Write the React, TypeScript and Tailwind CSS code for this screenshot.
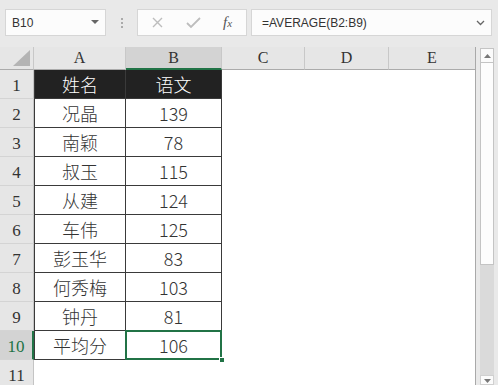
import React from "react";

const rows: [string, string][] = [
  ["况晶", "139"],
  ["南颖", "78"],
  ["叔玉", "115"],
  ["从建", "124"],
  ["车伟", "125"],
  ["彭玉华", "83"],
  ["何秀梅", "103"],
  ["钟丹", "81"],
];

const cjk = { fontFamily: '"Noto Sans CJK SC", "Noto Sans", sans-serif' };
const serif = { fontFamily: '"Liberation Serif", "DejaVu Serif", serif' };
const ui = { fontFamily: '"Liberation Sans", Arial, sans-serif' };

function RowHead({ n, sel, h = "h-[29px]" }: { n: number; sel?: boolean; h?: string }) {
  return (
    <div
      className={`w-[34px] ${h} shrink-0 flex items-end justify-center pb-[2px] text-[17px] leading-none border-b border-[#d4d4d4] ${
        sel ? "bg-[#d3d3d3] text-[#217346] border-r-2 border-r-[#217346]" : "bg-[#e6e6e6] text-[#333] border-r border-r-[#c4c4c4]"
      }`}
      style={serif}
    >
      <span className="pb-[2px]">{n}</span>
    </div>
  );
}

function Cell({ children, w, first, black, sel }: { children?: React.ReactNode; w: string; first?: boolean; black?: boolean; sel?: boolean }) {
  return (
    <div
      className={`${w} h-[29px] shrink-0 relative flex items-center justify-center text-[18px] font-light leading-none border-b border-r border-[#3a3a3a] ${
        first ? "border-l" : ""
      } ${black ? "bg-[#222222] text-white" : "bg-white text-[#333]"}`}
      style={cjk}
    >
      {children}
      {sel && (
        <>
          <div className="absolute left-[-1px] top-[-1px] right-[-1px] bottom-[-1px] border-2 border-[#217346]" />
          <div className="absolute right-[-4px] bottom-[-4px] w-[6px] h-[6px] bg-[#217346] border border-white" />
        </>
      )}
    </div>
  );
}

function ColHead({ label, w, sel }: { label: string; w: string; sel?: boolean }) {
  return (
    <div
      className={`${w} h-[23px] shrink-0 flex items-center justify-center text-[16px] leading-none text-[#333] ${
        sel ? "bg-[#d3d3d3] border-b-2 border-b-[#217346]" : "bg-[#e6e6e6] border-b border-b-[#ababab]"
      } border-r border-r-[#c8c8c8]`}
      style={serif}
    >
      {label}
    </div>
  );
}

export default function App() {
  return (
    <div className="w-[498px] h-[385px] overflow-hidden bg-[#e9e9e9] flex flex-col">
      {/* toolbar */}
      <div className="h-[47px] shrink-0 flex items-start pt-[9px] pl-[5px]">
        <div className="w-[101px] h-[27px] bg-[#fcfcfc] border border-[#d6d6d6] flex items-center justify-between pl-[6px] pr-[6px]">
          <span className="text-[12px] text-[#333]" style={ui}>B10</span>
          <svg width="8" height="5" viewBox="0 0 8 5"><path d="M0 0 L8 0 L4 4 Z" fill="#666" /></svg>
        </div>
        <div className="w-[31px] h-[27px] flex flex-col items-center justify-center gap-[2px]">
          <div className="w-[2px] h-[2px] bg-[#aaa]" />
          <div className="w-[2px] h-[2px] bg-[#aaa]" />
          <div className="w-[2px] h-[2px] bg-[#aaa]" />
        </div>
        <div className="w-[110px] h-[27px] bg-[#fcfcfc] border border-[#d6d6d6] flex items-center pl-[13px] gap-[0px]">
          <svg width="13" height="13" viewBox="0 0 13 13"><path d="M2 2 L11 11 M11 2 L2 11" stroke="#bdbdbd" strokeWidth="1.4" /></svg>
          <svg className="ml-[22px]" width="15" height="13" viewBox="0 0 15 13"><path d="M1 7 L5 11 L14 2" stroke="#bdbdbd" strokeWidth="1.8" fill="none" /></svg>
          <span className="ml-[22px] text-[15px] italic text-[#555]" style={serif}>f<span className="text-[11px]">x</span></span>
        </div>
        <div className="ml-[4px] w-[241px] h-[27px] bg-[#fcfcfc] border border-[#d6d6d6] flex items-center justify-between pl-[10px] pr-[6px]">
          <span className="text-[12px] text-[#333]" style={ui}>=AVERAGE(B2:B9)</span>
          <svg width="9" height="6" viewBox="0 0 9 6"><path d="M1 1 L4.5 4.5 L8 1" stroke="#666" strokeWidth="1.3" fill="none" /></svg>
        </div>
      </div>

      {/* sheet + scrollbar */}
      <div className="flex flex-1 min-h-0">
        <div className="w-[476px] shrink-0 flex flex-col border-r border-[#a9a9a9] bg-white">
          {/* header row */}
          <div className="flex bg-[#e6e6e6]">
            <div className="w-[34px] h-[23px] shrink-0 bg-[#e6e6e6] border-r border-[#c8c8c8] border-b border-b-[#ababab] flex items-end justify-end p-[3px]">
              <svg width="17" height="16" viewBox="0 0 17 16"><path d="M17 0 L17 16 L0 16 Z" fill="#b4b4b4" /></svg>
            </div>
            <ColHead label="A" w="w-[92px]" />
            <ColHead label="B" w="w-[96px]" sel />
            <ColHead label="C" w="w-[83px]" />
            <ColHead label="D" w="w-[84px]" />
            <div className="flex-1 h-[23px] flex items-center justify-center text-[16px] leading-none text-[#333] bg-[#e6e6e6] border-b border-b-[#ababab]" style={serif}>E</div>
          </div>
          {/* row 1 */}
          <div className="flex">
            <RowHead n={1} />
            <Cell w="w-[92px]" first black>姓名</Cell>
            <Cell w="w-[96px]" black>语文</Cell>
          </div>
          {rows.map(([name, score], i) => (
            <div className="flex" key={i}>
              <RowHead n={i + 2} />
              <Cell w="w-[92px]" first>{name}</Cell>
              <Cell w="w-[96px]">{score}</Cell>
            </div>
          ))}
          <div className="flex">
            <RowHead n={10} sel />
            <Cell w="w-[92px]" first>平均分</Cell>
            <Cell w="w-[96px]" sel>106</Cell>
          </div>
          <div className="flex">
            <RowHead n={11} h="h-[29px]" />
          </div>
        </div>
        {/* scrollbar */}
        <div className="w-[4px] shrink-0" />
        <div className="w-[14px] shrink-0 mt-[1px] bg-[#dadada] flex flex-col">
          <div className="h-[15px] bg-[#fbfbfb] border border-[#c4c4c4] flex items-center justify-center">
            <svg width="7" height="4" viewBox="0 0 7 4"><path d="M0 4 L3.5 0 L7 4 Z" fill="#777" /></svg>
          </div>
          <div className="h-[202px] bg-[#fdfdfd] border border-t-0 border-[#c4c4c4]" />
          <div className="flex-1" />
          <div className="h-[10px] bg-[#fbfbfb] border border-[#d0d0d0] flex items-start justify-center pt-[3px]">
            <svg width="7" height="4" viewBox="0 0 7 4"><path d="M0 0 L3.5 4 L7 0 Z" fill="#777" /></svg>
          </div>
        </div>
      </div>
    </div>
  );
}
